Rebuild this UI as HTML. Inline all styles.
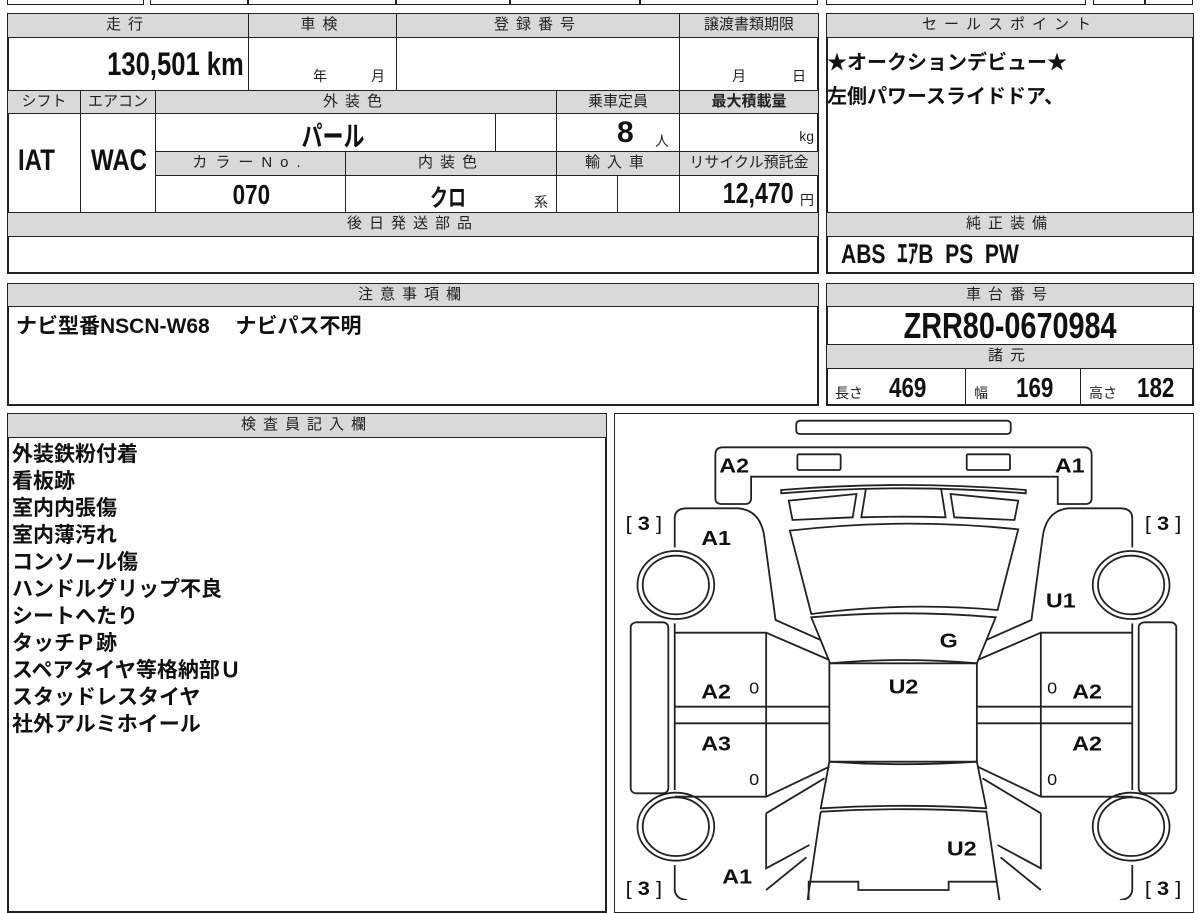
<!DOCTYPE html>
<html><head><meta charset="utf-8"><style>
*{margin:0;padding:0;box-sizing:border-box}
body{width:1200px;height:900px;background:#fff;position:relative;overflow:hidden;font-family:"Liberation Sans","Noto Sans CJK JP",sans-serif;color:#111}
.c{position:absolute;border:1px solid #222;overflow:hidden;white-space:nowrap}
.h{background:#d9d9d9;font-size:15px;text-align:center;line-height:22px;letter-spacing:7px;color:#222}
.o{position:absolute;border:2px solid #222}
.v{font-weight:bold;font-family:"Liberation Sans Narrow","Liberation Sans","Noto Sans CJK JP",sans-serif}
.s{position:absolute;font-size:14px;color:#222}
.t{position:absolute;font-weight:bold;font-size:22px;font-family:"Noto Sans CJK JP",sans-serif;white-space:nowrap}
</style></head><body>
<div class="c" style="left:7px;top:-10px;width:137px;height:15px"></div>
<div class="c" style="left:150px;top:-10px;width:98px;height:15px"></div>
<div class="c" style="left:248px;top:-10px;width:148px;height:15px"></div>
<div class="c" style="left:396px;top:-10px;width:114px;height:15px"></div>
<div class="c" style="left:510px;top:-10px;width:130px;height:15px"></div>
<div class="c" style="left:640px;top:-10px;width:178px;height:15px"></div>
<div class="c" style="left:826px;top:-10px;width:260px;height:15px"></div>
<div class="c" style="left:1093px;top:-10px;width:52px;height:15px"></div>
<div class="c" style="left:1145px;top:-10px;width:48px;height:15px"></div>

<div class="o" style="left:7px;top:13px;width:812px;height:261px"></div>
<div class="c h" style="left:7px;top:13px;width:242px;height:25px">走行</div>
<div class="c h" style="left:248px;top:13px;width:149px;height:25px">車検</div>
<div class="c h" style="left:396px;top:13px;width:284px;height:25px">登録番号</div>
<div class="c h" style="left:679px;top:13px;width:140px;height:25px;letter-spacing:0">譲渡書類期限</div>
<div class="c" style="left:7px;top:37px;width:242px;height:54px"><span class="v" style="position:absolute;right:4px;top:8px;font-size:32px;transform:scaleX(.8);transform-origin:right">130,501 km</span></div>
<div class="c" style="left:248px;top:37px;width:149px;height:54px"><span class="s" style="left:64px;top:28px">年</span><span class="s" style="left:122px;top:28px">月</span></div>
<div class="c" style="left:396px;top:37px;width:284px;height:54px"></div>
<div class="c" style="left:679px;top:37px;width:140px;height:54px"><span class="s" style="left:52px;top:28px">月</span><span class="s" style="left:112px;top:28px">日</span></div>
<div class="c h" style="left:7px;top:90px;width:74px;height:24px;letter-spacing:0">シフト</div>
<div class="c h" style="left:80px;top:90px;width:76px;height:24px;letter-spacing:0">エアコン</div>
<div class="c h" style="left:155px;top:90px;width:402px;height:24px">外装色</div>
<div class="c h" style="left:556px;top:90px;width:124px;height:24px;letter-spacing:0">乗車定員</div>
<div class="c h" style="left:679px;top:90px;width:140px;height:24px;letter-spacing:0;font-weight:bold">最大積載量</div>
<div class="c" style="left:7px;top:113px;width:74px;height:100px"><span class="v" style="position:absolute;left:10px;top:30px;font-size:30px;transform:scaleX(.8);transform-origin:left">IAT</span></div>
<div class="c" style="left:80px;top:113px;width:76px;height:100px"><span class="v" style="position:absolute;left:10px;top:30px;font-size:30px;transform:scaleX(.8);transform-origin:left">WAC</span></div>
<div class="c" style="left:155px;top:113px;width:341px;height:39px"><span class="v" style="position:absolute;left:135px;top:1px;font-size:28px;font-family:'Noto Sans CJK JP',sans-serif;transform:scaleX(.75)">パール</span></div>
<div class="c" style="left:495px;top:113px;width:62px;height:39px"></div>
<div class="c" style="left:556px;top:113px;width:124px;height:39px"><span class="v" style="position:absolute;left:60px;top:2px;font-size:30px">8</span><span class="s" style="left:98px;top:17px">人</span></div>
<div class="c" style="left:679px;top:113px;width:140px;height:39px"><span class="s" style="right:4px;top:14px">kg</span></div>
<div class="c h" style="left:155px;top:151px;width:191px;height:25px;letter-spacing:8px">カラーNo.</div>
<div class="c h" style="left:345px;top:151px;width:212px;height:25px">内装色</div>
<div class="c h" style="left:556px;top:151px;width:124px;height:25px">輸入車</div>
<div class="c h" style="left:679px;top:151px;width:140px;height:25px;letter-spacing:0">リサイクル預託金</div>
<div class="c" style="left:155px;top:175px;width:191px;height:38px"><span class="v" style="position:absolute;left:72px;top:3px;font-size:28px;transform:scaleX(.8)">070</span></div>
<div class="c" style="left:345px;top:175px;width:212px;height:38px"><span class="v" style="position:absolute;left:78px;top:2px;font-size:24px;font-family:'Noto Sans CJK JP',sans-serif;transform:scaleX(.75)">クロ</span><span class="s" style="left:188px;top:16px">系</span></div>
<div class="c" style="left:556px;top:175px;width:62px;height:38px"></div>
<div class="c" style="left:617px;top:175px;width:63px;height:38px"></div>
<div class="c" style="left:679px;top:175px;width:140px;height:38px"><span class="v" style="position:absolute;right:24px;top:2px;font-size:29px;transform:scaleX(.8);transform-origin:right">12,470</span><span class="s" style="right:4px;top:14px">円</span></div>
<div class="c h" style="left:7px;top:212px;width:812px;height:25px">後日発送部品</div>
<div class="c" style="left:7px;top:236px;width:812px;height:38px"></div>

<div class="o" style="left:826px;top:13px;width:368px;height:261px"></div>
<div class="c h" style="left:826px;top:13px;width:368px;height:25px">セールスポイント</div>
<div class="t" style="left:827px;top:46px;font-size:20px">★オークションデビュー★</div>
<div class="t" style="left:827px;top:80px;font-size:20px">左側パワースライドドア、</div>
<div class="c h" style="left:826px;top:212px;width:368px;height:25px">純正装備</div>
<div class="c" style="left:826px;top:236px;width:368px;height:38px"><span class="v" style="position:absolute;left:14px;top:1px;font-size:27px;line-height:32px;transform:scaleX(.78);transform-origin:left">ABS&nbsp; ｴｱB&nbsp; PS&nbsp; PW</span></div>

<div class="o" style="left:7px;top:283px;width:812px;height:123px"></div>
<div class="c h" style="left:7px;top:283px;width:812px;height:24px">注意事項欄</div>
<div class="t" style="left:16px;top:310px;font-size:21px">ナビ型番<span style="font-family:'Liberation Sans Narrow','Liberation Sans',sans-serif">NSCN-W68</span>　 ナビパス不明</div>

<div class="o" style="left:826px;top:283px;width:368px;height:123px"></div>
<div class="c h" style="left:826px;top:283px;width:368px;height:24px">車台番号</div>
<div class="c" style="left:826px;top:306px;width:368px;height:39px;text-align:center"><span class="v" style="display:inline-block;font-size:36px;line-height:38px;transform:scaleX(.8)">ZRR80-0670984</span></div>
<div class="c h" style="left:826px;top:344px;width:368px;height:25px">諸元</div>
<div class="c" style="left:826px;top:368px;width:140px;height:38px"><span class="s" style="left:8px;top:14px">長さ</span><span class="v" style="position:absolute;left:62px;top:3px;font-size:28px;transform:scaleX(.8);transform-origin:left">469</span></div>
<div class="c" style="left:965px;top:368px;width:116px;height:38px"><span class="s" style="left:8px;top:14px">幅</span><span class="v" style="position:absolute;left:50px;top:3px;font-size:28px;transform:scaleX(.8);transform-origin:left">169</span></div>
<div class="c" style="left:1080px;top:368px;width:114px;height:38px"><span class="s" style="left:8px;top:14px">高さ</span><span class="v" style="position:absolute;left:56px;top:3px;font-size:28px;transform:scaleX(.8);transform-origin:left">182</span></div>

<div class="o" style="left:7px;top:413px;width:600px;height:500px"></div>
<div class="c h" style="left:7px;top:413px;width:600px;height:25px">検査員記入欄</div>
<div class="t" style="left:12px;top:440px;line-height:27px;font-size:21px">外装鉄粉付着<br>看板跡<br>室内内張傷<br>室内薄汚れ<br>コンソール傷<br>ハンドルグリップ不良<br>シートへたり<br>タッチＰ跡<br>スペアタイヤ等格納部Ｕ<br>スタッドレスタイヤ<br>社外アルミホイール</div>

<div class="o" style="left:614px;top:413px;width:580px;height:500px;border-width:1px"></div>
<svg style="position:absolute;left:610px;top:410px" width="590" height="490" viewBox="0 0 1568 1470" preserveAspectRatio="none">
<g fill="none" stroke="#222" stroke-width="1.8">
<rect x="495" y="32" width="570" height="40" rx="10" vector-effect="non-scaling-stroke"/>
<path d="M300,112 H1260 Q1280,112 1280,135 V265 Q1280,282 1262,282 H1190 V200 H375 V265 Q375,282 358,282 H298 Q280,282 280,265 V135 Q280,112 300,112 Z" vector-effect="non-scaling-stroke"/>
<rect x="498" y="133" width="115" height="47" rx="4" vector-effect="non-scaling-stroke"/>
<rect x="948" y="133" width="115" height="47" rx="4" vector-effect="non-scaling-stroke"/>
<path d="M455,240 Q780,210 1105,240 L1105,250 Q780,220 455,250 Z" vector-effect="non-scaling-stroke"/>
<path d="M475,272 L655,252 L645,322 L485,330 Z" vector-effect="non-scaling-stroke"/>
<path d="M1085,272 L905,252 L915,322 L1075,330 Z" vector-effect="non-scaling-stroke"/>
<path d="M680,237 L668,322 Q780,318 892,322 L880,237" vector-effect="non-scaling-stroke"/>
<path d="M478,362 Q780,322 1085,358 L1030,600 Q780,575 535,612 Z" vector-effect="non-scaling-stroke"/>
<path d="M535,622 Q780,598 1025,622 L975,760 Q780,740 585,760 Z" vector-effect="non-scaling-stroke"/>
<rect x="583" y="760" width="392" height="295" vector-effect="non-scaling-stroke"/>
<path d="M583,1055 Q780,1070 975,1055 L1000,1195 Q780,1180 560,1195 Z" vector-effect="non-scaling-stroke"/>
<path d="M560,1205 Q780,1190 1000,1205 L1035,1470 M560,1205 L525,1470" vector-effect="non-scaling-stroke"/>
<path d="M528,1470 V1415 H660 V1440 H900 V1415 H1030" vector-effect="non-scaling-stroke"/>
<path d="M172,412 V325 Q172,295 205,295 H340 Q400,300 410,380 L440,630 L560,690" vector-effect="non-scaling-stroke"/>
<circle cx="175" cy="525" r="102" vector-effect="non-scaling-stroke"/>
<circle cx="175" cy="525" r="88" vector-effect="non-scaling-stroke"/>
<circle cx="175" cy="1250" r="102" vector-effect="non-scaling-stroke"/>
<circle cx="175" cy="1250" r="88" vector-effect="non-scaling-stroke"/>
<rect x="55" y="637" width="100" height="513" rx="15" vector-effect="non-scaling-stroke"/>
<path d="M172,640 V1140 M172,668 H415 L583,750 M415,668 V1160 M172,890 H583 M172,940 H583 M172,1160 H415 L583,1070" vector-effect="non-scaling-stroke"/>
<path d="M415,1210 L570,1105 M415,1210 V1375 L530,1305 M172,1365 V1440 Q175,1468 205,1470 M415,1440 L522,1342" vector-effect="non-scaling-stroke"/>
<path d="M1388,412 V325 Q1388,295 1355,295 H1220 Q1160,300 1150,380 L1120,630 L1000,690" vector-effect="non-scaling-stroke"/>
<circle cx="1385" cy="525" r="102" vector-effect="non-scaling-stroke"/>
<circle cx="1385" cy="525" r="88" vector-effect="non-scaling-stroke"/>
<circle cx="1385" cy="1250" r="102" vector-effect="non-scaling-stroke"/>
<circle cx="1385" cy="1250" r="88" vector-effect="non-scaling-stroke"/>
<rect x="1405" y="637" width="100" height="513" rx="15" vector-effect="non-scaling-stroke"/>
<path d="M1388,640 V1140 M1388,668 H1145 L977,750 M1145,668 V1160 M1388,890 H977 M1388,940 H977 M1388,1160 H1145 L977,1070" vector-effect="non-scaling-stroke"/>
<path d="M1145,1210 L990,1105 M1145,1210 V1375 L1030,1305 M1388,1365 V1440 Q1385,1468 1355,1470 M1145,1440 L1038,1342" vector-effect="non-scaling-stroke"/>
</g>
<g font-family="Liberation Sans,sans-serif" font-weight="bold" font-size="62" fill="#111" text-anchor="middle">
<text x="330" y="188">A2</text><text x="1222" y="188">A1</text>
<text x="282" y="405">A1</text><text x="1198" y="592">U1</text>
<text x="900" y="712">G</text><text x="780" y="850">U2</text>
<text x="282" y="865">A2</text><text x="1268" y="865">A2</text>
<text x="282" y="1022">A3</text><text x="1268" y="1022">A2</text>
<text x="935" y="1337">U2</text><text x="338" y="1420">A1</text>
</g>
<g font-family="Liberation Sans,sans-serif" font-size="48" fill="#111" text-anchor="middle">
<text x="383" y="850">0</text><text x="1175" y="850">0</text>
<text x="383" y="1125">0</text><text x="1175" y="1125">0</text>
</g>
<g font-family="Liberation Sans,sans-serif" font-size="58" fill="#111" text-anchor="middle">
<text x="90" y="360">[ <tspan font-weight="bold">3</tspan> ]</text>
<text x="1470" y="360">[ <tspan font-weight="bold">3</tspan> ]</text>
<text x="90" y="1455">[ <tspan font-weight="bold">3</tspan> ]</text>
<text x="1470" y="1455">[ <tspan font-weight="bold">3</tspan> ]</text>
</g>
</svg>
</body></html>
